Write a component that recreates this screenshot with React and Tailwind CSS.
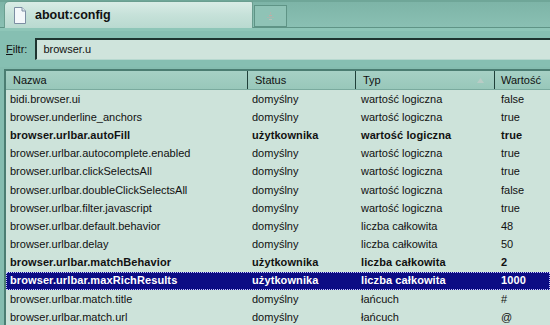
import React from 'react';

const rows = [
  { name: 'bidi.browser.ui', status: 'domyślny', type: 'wartość logiczna', value: 'false' },
  { name: 'browser.underline_anchors', status: 'domyślny', type: 'wartość logiczna', value: 'true' },
  { name: 'browser.urlbar.autoFill', status: 'użytkownika', type: 'wartość logiczna', value: 'true', bold: true },
  { name: 'browser.urlbar.autocomplete.enabled', status: 'domyślny', type: 'wartość logiczna', value: 'true' },
  { name: 'browser.urlbar.clickSelectsAll', status: 'domyślny', type: 'wartość logiczna', value: 'true' },
  { name: 'browser.urlbar.doubleClickSelectsAll', status: 'domyślny', type: 'wartość logiczna', value: 'false' },
  { name: 'browser.urlbar.filter.javascript', status: 'domyślny', type: 'wartość logiczna', value: 'true' },
  { name: 'browser.urlbar.default.behavior', status: 'domyślny', type: 'liczba całkowita', value: '48' },
  { name: 'browser.urlbar.delay', status: 'domyślny', type: 'liczba całkowita', value: '50' },
  { name: 'browser.urlbar.matchBehavior', status: 'użytkownika', type: 'liczba całkowita', value: '2', bold: true },
  { name: 'browser.urlbar.maxRichResults', status: 'użytkownika', type: 'liczba całkowita', value: '1000', bold: true, selected: true },
  { name: 'browser.urlbar.match.title', status: 'domyślny', type: 'łańcuch', value: '#' },
  { name: 'browser.urlbar.match.url', status: 'domyślny', type: 'łańcuch', value: '@' },
];

// Page icon on the tab
const PageIcon = () => (
  <svg width="12" height="17" viewBox="0 0 12 17">
    <path d="M0.5 0.5 H8 L11.5 4 V16.5 H0.5 Z" fill="#f4f8fb" stroke="#7c8ea3" />
    <path d="M8 0.5 V4 H11.5" fill="#dfe7ee" stroke="#7c8ea3" />
  </svg>
);

// faint "new tab" glyph on the small tab
const NewTabIcon = () => (
  <svg width="9" height="9" viewBox="0 0 9 9">
    <rect x="4" y="0" width="1" height="2" fill="#a9b7b0" />
    <rect x="3" y="3" width="3" height="1" fill="#c9a9a0" />
    <rect x="1" y="5" width="7" height="1" fill="#a9b7b0" />
    <rect x="3" y="7" width="3" height="1" fill="#b5c2bc" />
  </svg>
);

const Row = ({ row }) => {
  const base = row.selected ? 'bg-[#0c0c84] text-white' : 'text-[#111]';
  const weight = row.bold ? 'font-bold tracking-[0.1px]' : '';
  return (
    <div className={`flex h-[18.2px] items-center text-[11px] leading-none ${base} ${weight} ${row.selected ? 'outline outline-1 outline-dotted outline-[#c8c8ff] -outline-offset-1' : ''}`}>
      <div className="w-[243px] shrink-0 pl-[4px] truncate">{row.name}</div>
      <div className="w-[108px] shrink-0 pl-[3px]">{row.status}</div>
      <div className="w-[139px] shrink-0 pl-[4px]">{row.type}</div>
      <div className="flex-1 pl-[5px]">{row.value}</div>
    </div>
  );
};

const HeaderCell = ({ children, className = '' }) => (
  <div className={`flex h-full items-center border-r border-[#20403a] pl-[7px] ${className}`}>{children}</div>
);

export default function App() {
  return (
    <div className="w-[550px] h-[325px] overflow-hidden bg-[#84bcaf] text-black" style={{ fontFamily: '"Liberation Sans", Arial, sans-serif' }}>
      {/* Tab strip */}
      <div className="relative h-[31px] border-t-[2px] border-[#6fa698] bg-gradient-to-b from-[#7db4a7] to-[#8cc2b5]">
        <div className="absolute left-0 right-0 bottom-[3px] h-px bg-[#5f9486]" />
        <div className="absolute left-0 right-0 bottom-0 h-[3px] bg-[#8ec6b8]" />
        <div className="relative flex items-end h-full pl-[4px]">
          <div className="flex h-[27px] w-[249px] items-center gap-[9px] rounded-tl-[5px] rounded-tr-[2px] border border-b-0 border-[#6a9e90] bg-gradient-to-b from-[#d9ece6] via-[#c6e1d9] to-[#b9dad0] pl-[9px] mb-[3px] z-10">
            <PageIcon />
            <span className="text-[12.5px] font-bold text-[#111]">about:config</span>
          </div>
          <div className="flex h-[22px] w-[33px] items-center justify-center border border-[#5f9486] bg-[#8fc3b6] mb-[4px] ml-[1px]">
            <NewTabIcon />
          </div>
        </div>
      </div>

      {/* Filter bar */}
      <div className="flex h-[36px] items-center pl-[6px] pr-0 bg-[#86bfb2]">
        <span className="text-[11px] mr-[8px] text-[#111]"><span className="underline">F</span>iltr:</span>
        <div className="flex h-[22px] flex-1 items-center border-t-[2px] border-l-[2px] border-[#1e3430] border-b border-b-[#b6d8cf] bg-[#cfe4dc] pl-[6px]">
          <span className="text-[11px] text-[#111]">browser.u</span>
        </div>
      </div>

      {/* Table */}
      <div className="mt-[2px] ml-[4px] h-[260px] border-l-[2px] border-t-[2px] border-[#4b7d72] bg-[#cde3da] overflow-hidden">
        <div className="flex h-[19px] text-[11px] bg-gradient-to-b from-[#a6d0c5] to-[#98c7ba] border-b border-[#7aaa9e] text-[#111]">
          <HeaderCell className="w-[242px]">Nazwa</HeaderCell>
          <HeaderCell className="w-[108px] pl-[5px]">Status</HeaderCell>
          <HeaderCell className="w-[139px] pl-[5px] justify-between pr-[10px]">
            <span>Typ</span>
            <svg width="7" height="5" viewBox="0 0 7 5"><path d="M0 5 L3.5 0 L7 5 Z" fill="#b9ccc6" /></svg>
          </HeaderCell>
          <div className="flex h-full flex-1 items-center pl-[6px]">Wartość</div>
        </div>
        {rows.map((r, i) => (
          <Row key={i} row={r} />
        ))}
      </div>
    </div>
  );
}
